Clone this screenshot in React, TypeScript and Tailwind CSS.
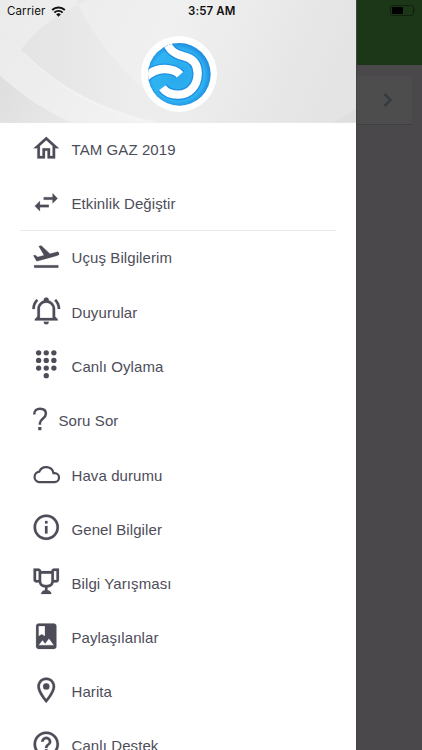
import type { ReactNode } from 'react';

const paths = {
  home: 'M12 5.69l5 4.5V18h-2v-6H9v6H7v-7.81l5-4.5M12 3L2 12h3v8h6v-6h2v6h6v-8h3L12 3',
  swap: 'M21 9l-4-4v3h-7v2h7v3M7 11l-4 4 4 4v-3h7v-2H7v-3z',
  takeoff:
    'M2.5 19h19v2h-19zm19.57-9.36c-.21-.8-1.04-1.28-1.84-1.06L14.92 10l-6.9-6.43-1.93.51 4.14 7.17-4.97 1.33-1.97-1.54-1.45.39 1.82 3.16.77 1.33 1.6-.43 5.31-1.42 4.35-1.16L21 11.49c.81-.23 1.28-1.05 1.07-1.85z',
  bell: 'M10 21h4a2 2 0 0 1-4 0M21 19v1H3v-1l2-2v-6C5 7.9 7.03 5.17 10 4.29V4a2 2 0 0 1 4 0v.29C16.97 5.17 19 7.9 19 11v6l2 2M17 11a5 5 0 0 0-10 0v7h10v-7M19.75 3.19l-1.42 1.42C20.04 6.3 21 8.6 21 11h2c0-2.93-1.16-5.75-3.25-7.81M1 11h2c0-2.4.96-4.7 2.67-6.39L4.25 3.19C2.16 5.25 1 8.07 1 11z',
  info: 'M11 9h2V7h-2m1 13c-4.41 0-8-3.59-8-8s3.59-8 8-8 8 3.59 8 8-3.59 8-8 8m0-18a10 10 0 1 0 0 20 10 10 0 0 0 0-20m-1 15h2v-6h-2v6z',
  trophy:
    'M2 2v9c0 1 1 2 2 2h2.2c.4 2 1.7 3.7 4.8 4v2.08C8 19.54 8 22 8 22h8s0-2.46-3-2.92V17c3.1-.3 4.4-2 4.8-4H20c1 0 2-1 2-2V2h-4c-.9 0-2 1-2 2H8c0-1-1.1-2-2-2H2zm2 2h2v7H4zm14 0h2v7h-2zM8 6h8v5.5c0 1.93-.58 3.5-4 3.5s-4-1.57-4-3.5z',
  album:
    'M18 2H6c-1.1 0-2 .9-2 2v16c0 1.1.9 2 2 2h12c1.1 0 2-.9 2-2V4c0-1.1-.9-2-2-2zM6 4h5v8l-2.5-1.5L6 12V4zm0 15l3-3.86 2.14 2.58 3-3.86L18 19H6z',
  pin: 'M12 2C8.13 2 5 5.13 5 9c0 5.25 7 13 7 13s7-7.75 7-13c0-3.87-3.13-7-7-7zM7 9c0-2.76 2.24-5 5-5s5 2.24 5 5c0 2.88-2.88 7.19-5 9.88C9.92 16.21 7 11.85 7 9zM12 6.5a2.5 2.5 0 1 1 0 5 2.5 2.5 0 0 1 0-5',
  help: 'M11 18h2v-2h-2v2zm1-16C6.48 2 2 6.48 2 12s4.48 10 10 10 10-4.48 10-10S17.52 2 12 2zm0 18c-4.41 0-8-3.59-8-8s3.59-8 8-8 8 3.59 8 8-3.59 8-8 8zm0-14c-2.21 0-4 1.79-4 4h2c0-1.1.9-2 2-2s2 .9 2 2c0 2-3 1.75-3 5h2c0-2.25 3-2.5 3-5 0-2.21-1.79-4-4-4z',
};

function Glyph({ d }: { d: string }) {
  return (
    <svg
      viewBox="0 0 24 24"
      className="size-[30.5px] shrink-0"
      fill="currentColor"
      fillRule="evenodd"
      stroke="currentColor"
      strokeWidth=".15"
    >
      <path d={d} />
    </svg>
  );
}

const dots = [[6, 3], [12, 3], [18, 3], [6, 9], [12, 9], [18, 9], [6, 15], [12, 15], [18, 15], [12, 21]];

function Dialpad() {
  return (
    <svg viewBox="0 0 24 24" className="size-[30.5px] shrink-0" fill="currentColor">
      {dots.map(([x, y]) => (
        <circle key={`${x}-${y}`} cx={x} cy={y} r="2.1" />
      ))}
    </svg>
  );
}

function Cloud() {
  return (
    <svg viewBox="0 0 28 20" className="h-5 w-7 shrink-0" fill="none" stroke="currentColor" strokeWidth="2.2">
      <path d="M7 18.1h15.4a4.4 4.4 0 0 0 .3-8.9h-1.2A7.5 7.5 0 0 0 7.3 7.6 5.3 5.3 0 0 0 7 18.1z" />
    </svg>
  );
}

function Question() {
  return (
    <svg viewBox="0 0 18 30" className="h-[30px] w-[18px]" fill="none" stroke="currentColor">
      <path d="M3.2 10.4C3.2 6.4 5.6 4.8 9 4.8s5.9 1.8 5.9 5c0 4.9-6 5-6 9.4v1.6" strokeWidth="2.5" />
      <path d="M8.8 23v3.2" strokeWidth="3.2" />
    </svg>
  );
}

function Row({ icon, label, narrow = false }: { icon: ReactNode; label: string; narrow?: boolean }) {
  return (
    <li className={`flex shrink-0 items-center pl-[31px] ${narrow ? 'h-[55px]' : 'h-[54.1px]'}`}>
      <span className={`flex shrink-0 justify-center pb-[3px] ${narrow ? 'w-[18px]' : 'w-[30px]'}`}>{icon}</span>
      <span className={`pt-[2px] ${narrow ? 'ml-[9.5px]' : 'ml-[10.5px]'}`}>{label}</span>
    </li>
  );
}

const outerSwirl = 'M108 122C114 144 126 159 158 167C190 174 203 194 202 222C201 258 176 282 146 283C122 284 106 275 96 262';
const innerSwirl = 'M41 236C60 214 82 205 106 206C128 207 140 213 149 223';

function Logo() {
  return (
    <svg viewBox="32 107 228 228" className="size-[76px]">
      <defs>
        <radialGradient id="blue" gradientUnits="userSpaceOnUse" cx="143" cy="225" r="98">
          <stop offset="0" stopColor="#2aa8ec" />
          <stop offset=".8" stopColor="#2fb4f2" />
          <stop offset="1" stopColor="#1f8ade" />
        </radialGradient>
        <clipPath id="disc">
          <circle cx="147" cy="222" r="94" />
        </clipPath>
      </defs>
      <circle cx="146" cy="221" r="114" fill="#fff" />
      <circle cx="147" cy="222" r="94" fill="url(#blue)" />
      <g clipPath="url(#disc)" fill="none">
        <g stroke="#218fe2" strokeWidth="33" strokeLinejoin="round">
          <path d={outerSwirl} />
          <path d={innerSwirl} />
        </g>
        <g stroke="#fff" strokeWidth="25">
          <path d={outerSwirl} />
          <path d={innerSwirl} />
        </g>
      </g>
    </svg>
  );
}

function Swooshes() {
  return (
    <svg viewBox="0 0 356 123" preserveAspectRatio="none" className="absolute inset-0 h-full w-full">
      <defs>
        <linearGradient id="base" x1="0" x2="1" y1="0" y2=".15">
          <stop offset="0" stopColor="#ebebeb" />
          <stop offset=".5" stopColor="#f0f0f0" />
          <stop offset="1" stopColor="#e4e4e4" />
        </linearGradient>
        <linearGradient id="shade" gradientUnits="userSpaceOnUse" x1="0" x2="142" y1="60" y2="60">
          <stop offset="0" stopColor="#e2e2e2" />
          <stop offset="1" stopColor="#ededed" />
        </linearGradient>
        <linearGradient id="band" gradientUnits="userSpaceOnUse" x1="0" x2="150" y1="40" y2="120">
          <stop offset="0" stopColor="#ebebeb" />
          <stop offset="1" stopColor="#f3f3f3" />
        </linearGradient>
        <linearGradient id="corner" gradientUnits="userSpaceOnUse" x1="0" x2="72" y1="90" y2="123">
          <stop offset="0" stopColor="#dfdfdf" />
          <stop offset="1" stopColor="#e9e9e9" />
        </linearGradient>
      </defs>
      <path d="M0 0H356V123H0z" fill="url(#base)" />
      <path d="M0 110C4 55 40 20 88 0H76C92 34 112 60 142 88C155 99 170 112 188 123H0z" fill="url(#shade)" />
      <path d="M0 28C38 72 82 106 160 123H65C35 110 15 95 0 78z" fill="url(#band)" />
      <path d="M24 53C57 86 93 108 142 121" fill="none" stroke="#f6f6f6" strokeWidth=".8" />
      <path d="M0 76C22 95 42 110 72 123H0z" fill="url(#corner)" />
      <path d="M333 123l23-13v13z" fill="#dfdfdf" />
    </svg>
  );
}

export default function App() {
  return (
    <div className="relative flex h-[750px] w-[422px] overflow-hidden bg-[#4a484b] font-['Liberation_Sans',Arial,sans-serif]">
      <aside className="flex w-[356px] shrink-0 flex-col overflow-hidden bg-white">
        <header className="relative h-[122.5px] shrink-0 overflow-hidden bg-[#ececec]">
          <Swooshes />
          <div className="relative flex h-[22px] items-center pl-[7px] font-['Inter',sans-serif] text-[11.5px] text-[#111]">
            <span className="w-[44px] whitespace-nowrap pt-px tracking-[0.1px]">Carrier</span>
            <svg viewBox="0 0 16 12" className="h-[11px] w-[15px]" fill="none" stroke="#111" strokeWidth="2.1">
              <path d="M1.1 4.4a9.8 9.8 0 0 1 13.8 0M3.5 7.2a6.4 6.4 0 0 1 9 0" />
              <path d="M8 11.6L5.4 9.1a3.7 3.7 0 0 1 5.2 0z" fill="#111" stroke="none" />
            </svg>
            <span className="ml-[122px] whitespace-nowrap pt-px font-semibold tracking-[0.1px]">3:57 AM</span>
          </div>
          <div className="relative mt-[14px] ml-[140.5px]">
            <Logo />
          </div>
        </header>
        <ul className="flex flex-col text-[15px] tracking-[0.09px] text-[#4d4d59]">
          <Row icon={<Glyph d={paths.home} />} label="TAM GAZ 2019" />
          <Row icon={<Glyph d={paths.swap} />} label="Etkinlik Değiştir" />
          <li className="relative -top-px -mb-px ml-5 h-px w-[316px] bg-[#e9e9e9]" />
          <Row icon={<Glyph d={paths.takeoff} />} label="Uçuş Bilgilerim" />
          <Row icon={<Glyph d={paths.bell} />} label="Duyurular" />
          <Row icon={<Dialpad />} label="Canlı Oylama" />
          <Row icon={<Question />} label="Soru Sor" narrow />
          <Row icon={<Cloud />} label="Hava durumu" />
          <Row icon={<Glyph d={paths.info} />} label="Genel Bilgiler" />
          <Row icon={<Glyph d={paths.trophy} />} label="Bilgi Yarışması" />
          <Row icon={<Glyph d={paths.album} />} label="Paylaşılanlar" />
          <Row icon={<Glyph d={paths.pin} />} label="Harita" />
          <Row icon={<Glyph d={paths.help} />} label="Canlı Destek" />
        </ul>
      </aside>
      <main className="flex w-[66px] flex-col border-l border-[#444]">
        <div className="flex h-[65px] shrink-0 justify-end bg-[#1b3717] pt-[5px] pr-[6px]">
          <svg viewBox="0 0 26 11" className="h-[11px] w-[26px]">
            <rect x=".5" y=".5" width="23" height="10" rx="2.5" fill="none" stroke="#10210e" />
            <rect x="2" y="2" width="11" height="7" rx="1" fill="#000" />
            <path d="M24.7 3.8q1.3 1.7 0 3.4z" fill="#10210e" />
          </svg>
        </div>
        <div className="mt-[11px] mr-[10px] flex h-[49px] items-center justify-end border-b border-[#3e3d3f] bg-[#4d4d4d] pr-[19px]">
          <svg viewBox="0 0 10 16" className="h-4 w-[10px]" fill="none" stroke="#343a3f" strokeWidth="2.4">
            <path d="M1.5 2l6 6-6 6" />
          </svg>
        </div>
      </main>
    </div>
  );
}
